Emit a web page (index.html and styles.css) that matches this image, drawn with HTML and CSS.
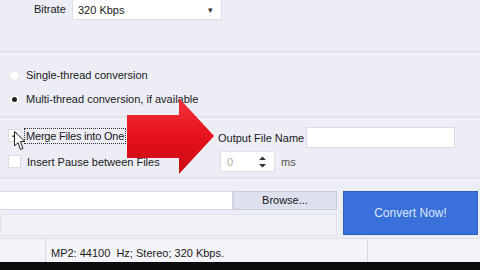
FILE: index.html
```html
<!DOCTYPE html>
<html lang="en">

<head>
    <meta charset="UTF-8">
    <title>Audio Converter</title>
    <link rel="stylesheet" href="styles.css">
</head>

<body>
    <div class="window">
        <div class="section top">
            <label class="bitrate-label">Bitrate</label>
            <div class="select">
                <span>320 Kbps</span>
                <span class="caret">&#9662;</span>
            </div>
        </div>
        <div class="sep"></div>

        <div class="section threads">
            <div class="radio-row"><span class="radio"></span>Single-thread conversion</div>
            <div class="radio-row"><span class="radio checked"></span>Multi-thread conversion, if available</div>
        </div>
        <div class="sep"></div>

        <div class="section merge">
            <div class="checks">
                <div class="check-row"><span class="box checked">&#10003;</span><span class="focus">Merge Files into One</span></div>
                <div class="check-row"><span class="box"></span><span class="plain">Insert Pause between Files</span></div>
            </div>
            <div class="output">
                <div class="out-row">
                    <span class="out-label">Output File Name</span>
                    <div class="text-input name-input"></div>
                </div>
                <div class="out-row">
                    <div class="spin">
                        <span>0</span>
                        <svg width="9" height="14" viewBox="0 0 9 14"><path d="M1 5 L4.5 1.5 L8 5 Z M1 9 L4.5 12.5 L8 9 Z" fill="#333"/></svg>
                    </div>
                    <span class="ms">ms</span>
                </div>
            </div>
        </div>
        <div class="sep"></div>

        <div class="section bottom">
            <div class="path-col">
                <div class="path-row">
                    <div class="text-input path-input"></div>
                    <div class="browse">Browse...</div>
                </div>
                <div class="path-band"></div>
            </div>
            <div class="convert">Convert Now!</div>
        </div>

        <div class="status">
            <div class="status-cell first"></div>
            <div class="status-cell info">MP2: 44100&nbsp; Hz; Stereo; 320 Kbps.</div>
            <div class="status-cell last"></div>
        </div>
        <div class="taskbar"></div>

        <svg class="big-arrow" width="100" height="90" viewBox="0 0 100 90">
            <defs>
                <linearGradient id="red" x1="0" y1="0" x2="0" y2="1">
                    <stop offset="0" stop-color="#f4343e"/>
                    <stop offset="0.5" stop-color="#e6111b"/>
                    <stop offset="1" stop-color="#c90a12"/>
                </linearGradient>
            </defs>
            <path d="M0 18 L52 18 L52 1 L87 39 L52 77 L52 61 L0 61 Z" fill="url(#red)"/>
        </svg>

        <svg class="cursor" width="12" height="20" viewBox="0 0 12 20">
            <path d="M0.5 0.5 L0.5 15 L4 11.5 L6.5 18.5 L9 17.5 L6.5 10.5 L11 10.5 Z" fill="#fff" stroke="#222" stroke-width="1"/>
        </svg>
    </div>
</body>

</html>
```

FILE: styles.css
```css
* {
    box-sizing: border-box;
}

body {
    margin: 0;
    font-family: "Liberation Sans", Arial, sans-serif;
    font-size: 11px;
    color: #1a1a1a;
}

.window {
    position: relative;
    width: 480px;
    height: 270px;
    background-color: #ecedf5;
    overflow: hidden;
}

.sep {
    height: 4px;
    border-top: 1px solid #d9dae6;
    border-bottom: 1px solid #f7f7fb;
}

.top {
    height: 51px;
    display: flex;
    align-items: flex-start;
    padding-left: 34px;
}

.bitrate-label {
    margin-top: 3px;
    width: 38px;
}

.select {
    width: 150px;
    height: 20px;
    background-color: #fff;
    border: 1px solid #dcdde6;
    border-top: none;
    display: flex;
    justify-content: space-between;
    align-items: center;
    padding: 0 8px 0 5px;
}

.caret {
    font-size: 9px;
    color: #333;
}

.threads {
    height: 61px;
    padding: 14px 0 0 9px;
    display: flex;
    flex-direction: column;
    gap: 12px;
}

.radio-row {
    display: flex;
    align-items: center;
    height: 12px;
}

.radio {
    width: 11px;
    height: 11px;
    border-radius: 50%;
    background-color: #fff;
    border: 1px solid #e2e3ea;
    margin-right: 6px;
    display: flex;
    align-items: center;
    justify-content: center;
}

.radio.checked::after {
    content: "";
    width: 5px;
    height: 5px;
    border-radius: 50%;
    background-color: #222;
}

.merge {
    height: 57px;
    display: flex;
    padding: 7px 0 0 8px;
}

.checks {
    width: 210px;
    display: flex;
    flex-direction: column;
    gap: 9px;
}

.check-row {
    display: flex;
    align-items: center;
    height: 17px;
}

.box {
    width: 13px;
    height: 13px;
    background-color: #fff;
    border: 1px solid #dadbe3;
    margin-right: 3px;
    font-size: 9px;
    line-height: 11px;
    text-align: center;
    color: #222;
}

.focus {
    border: 1px dotted #333;
    padding: 1px 1px;
    letter-spacing: -0.2px;
}

.plain {
    padding-left: 3px;
}

.output {
    display: flex;
    flex-direction: column;
    gap: 3px;
}

.out-row {
    display: flex;
    align-items: center;
    height: 21px;
}

.out-label {
    width: 88px;
}

.text-input {
    background-color: #fff;
    border: 1px solid #d8d9e2;
}

.name-input {
    width: 149px;
    height: 21px;
}

.spin {
    width: 55px;
    height: 21px;
    margin-left: 2px;
    background-color: #fff;
    border: 1px solid #e0e1e8;
    display: flex;
    align-items: center;
    justify-content: space-between;
    padding: 0 7px 0 6px;
    color: #aaa;
}

.ms {
    margin-left: 6px;
    color: #555;
}

.bottom {
    height: 57px;
    display: flex;
    padding-top: 10px;
}

.path-col {
    width: 337px;
    display: flex;
    flex-direction: column;
    gap: 4px;
}

.path-row {
    display: flex;
    height: 19px;
}

.path-input {
    width: 233px;
    border-left: none;
}

.browse {
    flex: 1;
    background-color: #dde0ed;
    border: 1px solid #c9ccd9;
    text-align: center;
    line-height: 16px;
}

.path-band {
    height: 22px;
    background-color: #f1f2f8;
    border: 1px solid #e2e3eb;
}

.convert {
    width: 135px;
    height: 44px;
    margin-left: 6px;
    background-color: #3a70d9;
    border: 1px solid #2f5fbf;
    color: #dce7ff;
    font-size: 12px;
    display: flex;
    align-items: center;
    justify-content: center;
}

.status {
    height: 24px;
    display: flex;
    background-color: #f4f4f8;
    border-top: 1px solid #dfe0e8;
}

.status-cell {
    border-right: 1px solid #d8d9e0;
    display: flex;
    align-items: center;
    padding-top: 4px;
}

.status-cell.first {
    width: 46px;
}

.status-cell.info {
    width: 322px;
    padding-left: 5px;
}

.status-cell.last {
    flex: 1;
    border-right: none;
}

.taskbar {
    height: 8px;
    background-color: #0c0c0e;
}

.big-arrow {
    position: absolute;
    left: 127px;
    top: 97px;
}

.cursor {
    position: absolute;
    left: 14px;
    top: 131px;
}
```
